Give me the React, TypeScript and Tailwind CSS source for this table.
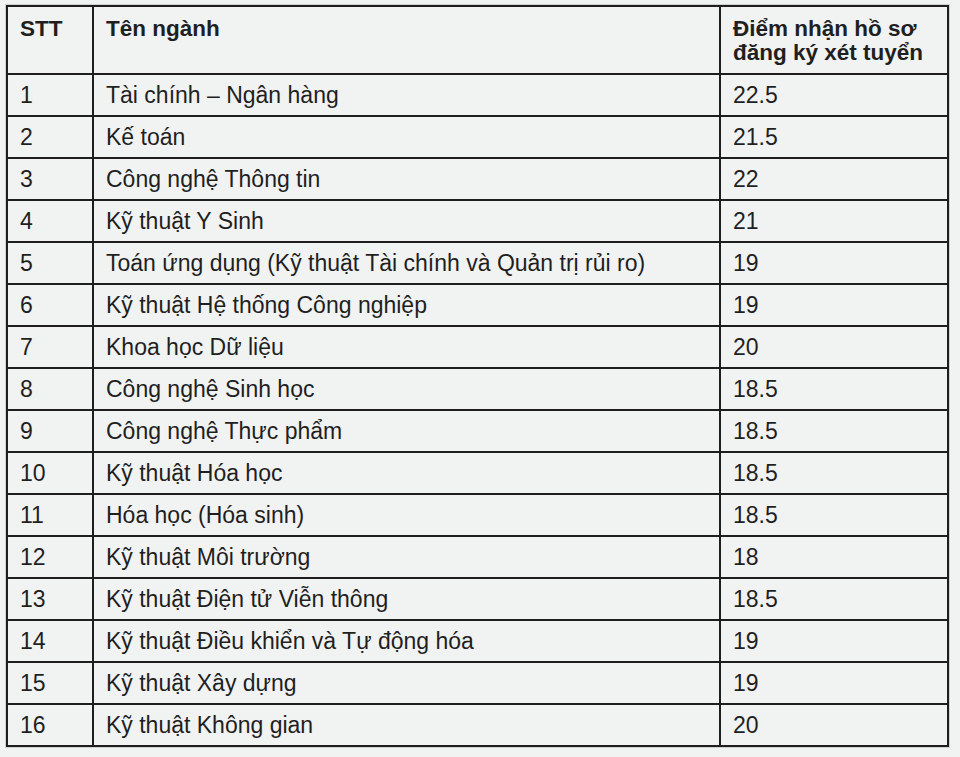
const rows: [string, string, string][] = [
  ["1", "Tài chính – Ngân hàng", "22.5"],
  ["2", "Kế toán", "21.5"],
  ["3", "Công nghệ Thông tin", "22"],
  ["4", "Kỹ thuật Y Sinh", "21"],
  ["5", "Toán ứng dụng (Kỹ thuật Tài chính và Quản trị rủi ro)", "19"],
  ["6", "Kỹ thuật Hệ thống Công nghiệp", "19"],
  ["7", "Khoa học Dữ liệu", "20"],
  ["8", "Công nghệ Sinh học", "18.5"],
  ["9", "Công nghệ Thực phẩm", "18.5"],
  ["10", "Kỹ thuật Hóa học", "18.5"],
  ["11", "Hóa học (Hóa sinh)", "18.5"],
  ["12", "Kỹ thuật Môi trường", "18"],
  ["13", "Kỹ thuật Điện tử Viễn thông", "18.5"],
  ["14", "Kỹ thuật Điều khiển và Tự động hóa", "19"],
  ["15", "Kỹ thuật Xây dựng", "19"],
  ["16", "Kỹ thuật Không gian", "20"],
];

export default function App() {
  return (
    <div className="w-[960px] h-[757px] bg-[#f1f2f2] pt-[5px] pl-[6px] font-['Liberation_Sans',Arial,sans-serif] text-[#1f1f1f] text-[23px]">
      <table className="w-[941px] table-fixed border-collapse border-2 border-[#1e1e1e] outline outline-1 outline-[#cfd1d1]">
        <colgroup>
          <col className="w-[86px]" />
          <col className="w-[627px]" />
          <col className="w-[228px]" />
        </colgroup>
        <thead>
          <tr className="h-[68px] text-[22.5px]">
            <th className="border-2 border-[#1e1e1e] align-top text-left font-bold pl-[12px] pr-[4px] pt-[10px] leading-[24px]">STT</th>
            <th className="border-2 border-[#1e1e1e] align-top text-left font-bold pl-[12px] pr-[4px] pt-[10px] leading-[24px]">Tên ngành</th>
            <th className="border-2 border-[#1e1e1e] align-top text-left font-bold pl-[12px] pr-[4px] pt-[10px] leading-[24px]">
              Điểm nhận hồ sơ đăng ký xét tuyển
            </th>
          </tr>
        </thead>
        <tbody>
          {rows.map(([stt, name, score]) => (
            <tr key={stt} className="h-[42px]">
              <td className="border-2 border-[#1e1e1e] pl-[12px] pr-[4px] py-0 align-middle leading-[24px]">{stt}</td>
              <td className="border-2 border-[#1e1e1e] pl-[12px] pr-[4px] py-0 align-middle leading-[24px]">{name}</td>
              <td className="border-2 border-[#1e1e1e] pl-[12px] pr-[4px] py-0 align-middle leading-[24px]">{score}</td>
            </tr>
          ))}
        </tbody>
      </table>
    </div>
  );
}
